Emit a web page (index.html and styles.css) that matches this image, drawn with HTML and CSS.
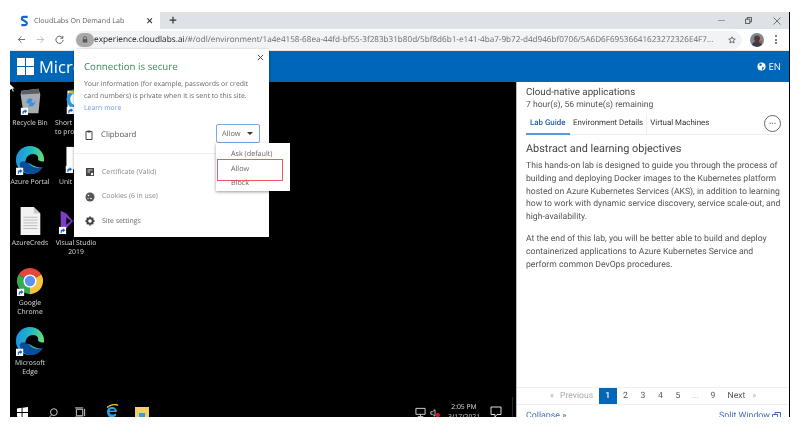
FILE: index.html
```html
<!DOCTYPE html>
<html lang="en">
<head>
<meta charset="utf-8">
<title>CloudLabs On Demand Lab</title>
<link rel="stylesheet" href="styles.css">
</head>
<body>
<svg class="defs" width="0" height="0" aria-hidden="true">
  <defs>
    <symbol id="sc" viewBox="0 0 8 8"><rect width="8" height="8" fill="#fff"/><path d="M2 7V4.500C2 3.500 3 3 4.500 3V1.600L7 3.800 4.500 6V4.600C3.500 4.600 3 5.400 3 7Z" fill="#1a62c4"/></symbol>
    <linearGradient id="edgeA" x1="0" y1="0.300" x2="1" y2="0.500"><stop offset="0" stop-color="#1f8fe0"/><stop offset=".5" stop-color="#24b8c4"/><stop offset="1" stop-color="#6ae070"/></linearGradient>
    <symbol id="edge" viewBox="0 0 32 32">
      <circle cx="16" cy="16" r="15" fill="url(#edgeA)"/>
      <path d="M5 20C5 28 13 31.500 18 31C24 30.500 28 27 30.500 22C26 25 20 25 16 21C12 17 7 16 5 20Z" fill="#0a4c9c"/>
      <path d="M11 19C11 13 15 9.500 19.500 9.500C23.500 9.500 25.500 12.500 24.500 15.500C26 17.500 29 18 32 17.500L32 22C30 24 25 24.500 20.500 22.500C17 21 14 17.500 11 19Z" fill="#000"/>
    </symbol>
  </defs>
</svg>
<div class="window">
  <div class="tabstrip">
    <div class="tab">
      <svg class="fav" viewBox="0 0 10 12"><path d="M8.500 1.500H4C1.500 1.500 1.500 5 4 5.300L6 6.500C8.500 7.500 8 10.500 5.500 10.500H1.500" fill="none" stroke="#1668c7" stroke-width="2.400"/></svg>
      <span class="tab-title">CloudLabs On Demand Lab</span>
      <span class="tab-close">×</span>
    </div>
    <span class="new-tab">+</span>
    <div class="win-controls">
      <span class="win-min"></span>
      <svg class="win-max" viewBox="0 0 8 8"><path d="M.5 2.500h5v5h-5zM2.500 2.500v-2h5v5h-2" fill="none" stroke="#444"/></svg>
      <svg class="win-close" viewBox="0 0 8 8"><path d="M.5.500l7 7M7.500.500l-7 7" stroke="#666" stroke-width=".9"/></svg>
    </div>
  </div>
  <div class="toolbar">
    <svg class="nav" viewBox="0 0 10 10"><path d="M9 5H1.500M5 1.500L1.500 5 5 8.500" fill="none" stroke="#5f6368" stroke-width="1"/></svg>
    <svg class="nav" viewBox="0 0 10 10"><path d="M1 5h7.500M5 1.500L8.500 5 5 8.500" fill="none" stroke="#b5b8bc" stroke-width="1"/></svg>
    <svg class="nav" viewBox="0 0 10 10"><path d="M8.400 3.200A4 4 0 1 0 9 5.500M8.700 .9v2.700H6" fill="none" stroke="#5f6368" stroke-width="1.100"/></svg>
    <div class="omnibox">
      <span class="lock-chip"><svg class="lock" viewBox="0 0 8 9"><path d="M2 4V2.500a2 2 0 0 1 4 0V4" fill="none" stroke="#555"/><rect x="1" y="4" width="6" height="4.500" fill="#555"/></svg></span>
      <span class="url"><b class="host">experience.cloudlabs.ai</b>/#/odl/environment/1a4e4158-68ea-44fd-bf55-3f283b31b80d/5bf8d6b1-e141-4ba7-9b72-d4d946bf0706/5A6D6F69536641623272326E4F7...</span>
      <svg class="star" viewBox="0 0 10 10"><path d="M5 .9l1.200 2.700 2.900.3-2.200 1.900.7 2.900L5 7.200 2.400 8.700l.7-2.900L.9 3.900l2.900-.3z" fill="none" stroke="#444" stroke-width=".9"/></svg>
    </div>
    <svg class="avatar" viewBox="0 0 14 14"><circle cx="7" cy="7" r="7" fill="#7d8a96"/><circle cx="7" cy="5.500" r="3" fill="#5b3a2c"/><path d="M2 12c1-3 3-4 5-4s4 1 5 4l-5 2z" fill="#3c3a48"/><circle cx="10.500" cy="9" r="1.500" fill="#a5533a"/></svg>
    <span class="kebab"><i></i><i></i><i></i></span>
  </div>
  <header class="brandbar">
    <svg class="ms-logo" viewBox="0 0 17 17"><path d="M0 0h8v8H0zM9 0h8v8H9zM0 9h8v8H0zM9 9h8v8H9z" fill="#fff"/></svg>
    <span class="brand">Micro</span>
    <span class="lang">
      <svg class="globe" viewBox="0 0 10 10"><circle cx="5" cy="5" r="4.500" fill="#fff"/><path d="M3 1.500l2.500 1-1 2-2-.5zM6 5.500l2 .5-1.500 2.500H5.500z" fill="#0067b8"/></svg>
      EN
    </span>
  </header>
  <div class="workspace">
    <section class="desktop">
      <div class="dicon d-recycle">
        <svg class="ico" viewBox="0 0 32 32"><path d="M7 5l18-2 2 6-2 20H9L6 9z" fill="#a8adb3"/><path d="M7 5l18-2 1 5-19 1z" fill="#5c6066"/><path d="M13 15c2-3 5-2 6 0l-2 2 4 1 0-4 1 3c-1 4-5 6-8 4l2-2-4-1z" fill="#3b8ede"/><use href="#sc" x="6" y="23" width="8" height="8"/></svg>
        <span>Recycle Bin</span>
      </div>
      <div class="dicon d-short">
        <svg class="ico" viewBox="0 0 32 32"><rect x="9" y="5" width="22" height="20" fill="#fff"/><circle cx="19" cy="14" r="9" fill="none" stroke="#2a9ae0" stroke-width="4"/><path d="M11 6l18 4" stroke="#f0c020" stroke-width="2.500"/><use href="#sc" x="8" y="22" width="8" height="8"/></svg>
        <span class="clip-label">Short<br>to pro</span>
      </div>
      <div class="dicon d-azure">
        <svg class="ico" viewBox="0 0 32 32"><use href="#edge"/><use href="#sc" x="1" y="24" width="8" height="8"/></svg>
        <span>Azure Portal</span>
      </div>
      <div class="dicon d-unity">
        <svg class="ico" viewBox="0 0 32 32"><rect x="9" y="2" width="24" height="24" fill="#fff"/><path d="M24 8l-7 6 7 6 3-2-3-4 3-4z" fill="#222"/><use href="#sc" x="8" y="22" width="8" height="8"/></svg>
        <span class="clip-label">Unit</span>
      </div>
      <div class="dicon d-creds">
        <svg class="ico" viewBox="0 0 32 32"><path d="M6 1h14l7 7v23H6z" fill="#f2f2f2"/><path d="M20 1l7 7h-7z" fill="#c9c9c9"/><path d="M9 12h15M9 15h15M9 18h15M9 21h15M9 24h15" stroke="#b9b9b9"/></svg>
        <span>AzureCreds</span>
      </div>
      <div class="dicon d-vs">
        <svg class="ico" viewBox="0 0 32 32"><path d="M5 5l6 3 7 8 8-11 3 2v18l-3 2-8-11-7 8-6 3z" fill="#7b3fc4"/><path d="M11 12l5 4-5 4z" fill="#000"/><use href="#sc" x="3" y="22" width="8" height="8"/></svg>
        <span>Visual Studio<br>2019</span>
      </div>
      <div class="dicon d-chrome">
        <svg class="ico" viewBox="0 0 32 32"><path d="M16 16L3.900 9A14 14 0 0 1 28.100 9Z" fill="#e2483d"/><path d="M16 16L28.100 9A14 14 0 0 1 16 30Z" fill="#f6c33c"/><path d="M16 16L16 30A14 14 0 0 1 3.900 9Z" fill="#36a853"/><circle cx="16" cy="16" r="7" fill="#fff"/><circle cx="16" cy="16" r="5.500" fill="#5a93ee"/><use href="#sc" x="2" y="24" width="8" height="8"/></svg>
        <span>Google<br>Chrome</span>
      </div>
      <div class="dicon d-edge">
        <svg class="ico" viewBox="0 0 32 32"><use href="#edge"/><use href="#sc" x="1" y="24" width="8" height="8"/></svg>
        <span>Microsoft<br>Edge</span>
      </div>

      <div class="taskbar">
        <svg class="tb-win" viewBox="0 0 12 12"><path d="M0 1.500l5-.7v4.700H0zM6 .7L12 0v5.500H6zM0 6.500h5v4.700l-5-.7zM6 6.500h6V12l-6-.7z" fill="#fff"/></svg>
        <svg class="tb-search" viewBox="0 0 12 12"><circle cx="7.500" cy="4.500" r="3.700" fill="none" stroke="#ddd"/><path d="M5 7.500L1 11.500" stroke="#ddd"/></svg>
        <svg class="tb-task" viewBox="0 0 12 12"><path d="M1.500 2.500h7v7h-7zM0 1h9M0 11h9M10.500 2v8" fill="none" stroke="#ddd"/></svg>
        <svg class="tb-ie" viewBox="0 0 14 14"><path d="M3 11.500C1 8 2 3 7 3c3 0 5 2 5 5H4.500c0 2.500 3.500 3.500 6.500 1.500v2.500C7 14 4.500 14 3 11.500zM4.700 6.500h5C9.500 4.500 5.500 4.500 4.700 6.500z" fill="#2c9de0" fill-rule="evenodd"/><path d="M2 3.500c4-3.500 9-3.500 11-2" stroke="#f0c020" stroke-width="1.300" fill="none"/></svg>
        <svg class="tb-folder" viewBox="0 0 14 14"><rect x="0" y="0" width="14" height="14" fill="#f2d06b"/><rect x="4" y="6" width="6" height="6" fill="#3aa0d0"/></svg>
        <div class="tray">
          <svg class="tr-net" viewBox="0 0 12 12"><path d="M1 1.500h10v6.500H1zM6 8v2M3 10.500h6" fill="none" stroke="#ddd"/></svg>
          <span class="tr-vol"><svg viewBox="0 0 12 12"><path d="M1 4.500h2L6 2v8L3 7.500H1z" fill="none" stroke="#ddd"/><circle cx="9.500" cy="8.500" r="2.500" fill="#e81123"/></svg></span>
          <span class="clock">2:05 PM<br>3/17/2021</span>
          <svg class="tr-note" viewBox="0 0 12 12"><path d="M1 1h10v7.500H7L5 11V8.500H1z" fill="none" stroke="#ddd"/></svg>
        </div>
      </div>
    </section>

    <aside class="guide">
      <div class="guide-top">
        <h1>Cloud-native applications</h1>
        <p class="remaining">7 hour(s), 56 minute(s) remaining</p>
        <div class="tabs">
          <span class="gtab active">Lab Guide</span>
          <span class="gtab">Environment Details</span>
          <span class="gtab last">Virtual Machines</span>
          <span class="more">···</span>
        </div>
      </div>
      <div class="guide-body">
        <h2>Abstract and learning objectives</h2>
        <p>This hands-on lab is designed to guide you through the process of building and deploying Docker images to the Kubernetes platform hosted on Azure Kubernetes Services (AKS), in addition to learning how to work with dynamic service discovery, service scale-out, and high-availability.</p>
        <p>At the end of this lab, you will be better able to build and deploy containerized applications to Azure Kubernetes Service and perform common DevOps procedures.</p>
      </div>
      <nav class="pager">
        <span class="p-mute pg-prev">«</span><span class="p-mute pg-prevw">Previous</span>
        <span class="pg current">1</span><span class="pg">2</span><span class="pg">3</span><span class="pg">4</span><span class="pg">5</span><span class="pg p-mute">...</span><span class="pg">9</span>
        <span class="pg-next">Next</span><span class="p-mute pg-nextm">»</span>
      </nav>
      <div class="guide-foot">
        <span>Collapse »</span>
        <span class="split">Split Window
          <svg class="split-ico" viewBox="0 0 9 9"><path d="M.5 2.500h5v5h-5zM3 2.500V.5h5.500V6H5.500" fill="none" stroke="#3f6fb0"/></svg>
        </span>
      </div>
    </aside>
  </div>

  <div class="popup">
    <svg class="pop-x" viewBox="0 0 8 8"><path d="M1 1l6 6M7 1L1 7" stroke="#444" stroke-width="1.100"/></svg>
    <div class="pop-head">
      <h3>Connection is secure</h3>
      <p>Your information (for example, passwords or credit card numbers) is private when it is sent to this site.</p>
      <a>Learn more</a>
    </div>
    <div class="pop-perm">
      <svg class="pi" viewBox="0 0 10 10"><path d="M2 1.500h6v8H2z" fill="none" stroke="#444"/><rect x="3.500" y=".5" width="3" height="2" fill="#444"/></svg>
      <span class="perm-name">Clipboard</span>
      <span class="select">Allow<i class="caret"></i></span>
    </div>
    <div class="pop-list">
      <div class="pop-row">
        <svg class="pi" viewBox="0 0 10 10"><rect x="1" y="1" width="8" height="8" fill="#444"/><path d="M2.500 3h5M2.500 5h2.500" stroke="#fff" stroke-width=".8"/><circle cx="7" cy="7" r="1.200" fill="#fff"/></svg>
        <span>Certificate (Valid)</span>
      </div>
      <div class="pop-row">
        <svg class="pi" viewBox="0 0 10 10"><circle cx="5" cy="5" r="4.500" fill="#555"/><circle cx="3.500" cy="3.500" r=".8" fill="#fff"/><circle cx="6" cy="6.500" r=".8" fill="#fff"/><circle cx="3" cy="6.500" r=".6" fill="#fff"/></svg>
        <span>Cookies (6 in use)</span>
      </div>
      <div class="pop-row dark">
        <svg class="pi" viewBox="0 0 10 10"><circle cx="5" cy="5" r="2.800" fill="none" stroke="#444" stroke-width="2"/><path d="M5 .3v2M5 7.700v2M.3 5h2M7.700 5h2M1.700 1.700l1.400 1.400M6.900 6.900l1.400 1.400M1.700 8.300l1.400-1.400M6.900 3.100l1.400-1.400" stroke="#444" stroke-width="1.300"/></svg>
        <span>Site settings</span>
      </div>
    </div>
    <div class="menu">
      <div class="opt">Ask (default)</div>
      <div class="opt sel">Allow</div>
      <div class="opt">Block</div>
    </div>
  </div>
  <svg class="cursor" viewBox="0 0 6 9"><path d="M0 0v7l2-1.600L3.500 9l1-.5L3 5.200h2.500z" fill="#fff"/></svg>
</div>
</body>
</html>
```
FILE: styles.css
```css
* { box-sizing: border-box; }
html, body { margin: 0; padding: 0; height: 100%; background: #fff; overflow: hidden; }
body { font-family: "Open Sans", "Liberation Sans", sans-serif; color: #444; text-rendering: geometricPrecision; }
.defs { position: absolute; }

.window {
  position: relative;
  width: 780px;
  height: 405px;
  margin: 12px 0 0 10px;
  display: flex;
  flex-direction: column;
  overflow: hidden;
  border-right: 1px solid #000;
  filter: blur(.45px);
}

/* browser chrome */
.tabstrip { height: 17px; flex: none; display: flex; align-items: center; background: #dee1e6; }
.tab { width: 150px; height: 17px; background: #fff; display: flex; align-items: center; padding: 0 7px 0 10px; }
.fav { width: 9px; height: 12px; flex: none; }
.tab-title { margin-left: 5px; font-size: 7.100px; color: #5f6368; white-space: nowrap; }
.tab-close { margin-left: auto; font-size: 12px; line-height: 12px; color: #333; font-weight: 600; }
.new-tab { margin-left: 9px; font-size: 14px; line-height: 16px; color: #333; font-weight: 600; }
.win-controls { margin-left: auto; display: flex; align-items: center; padding-right: 8px; }
.win-min { width: 7px; height: 1px; background: #999; margin-right: 20px; }
.win-max { width: 7px; height: 7px; margin-right: 21px; }
.win-close { width: 8px; height: 8px; }

.toolbar { height: 22px; flex: none; display: flex; align-items: center; background: #fff; padding-left: 7px; border-bottom: 1px solid #e5e7ea; }
.nav { width: 9px; height: 9px; margin-right: 10px; flex: none; }
.omnibox { width: 667px; height: 18px; margin-left: 1px; background: #f1f3f4; border-radius: 9px; display: flex; align-items: center; flex: none; }
.lock-chip { width: 18px; height: 14px; margin-left: 1px; border-radius: 7px; background: #a9a9a9; display: flex; align-items: center; justify-content: center; flex: none; }
.lock { width: 6px; height: 7px; }
.url { font-size: 8.150px; color: #6a6d70; white-space: nowrap; width: 626px; }
.host { font-size: 8.300px; font-weight: 400; color: #222; }
.star { width: 8px; height: 8px; margin-left: auto; margin-right: 6px; flex: none; }
.avatar { width: 14px; height: 14px; margin-left: 8px; flex: none; }
.kebab { margin-left: 11px; display: flex; flex-direction: column; gap: 1.500px; }
.kebab i { width: 2px; height: 2px; background: #555; border-radius: 50%; display: block; }

.brandbar { height: 31px; flex: none; display: flex; align-items: center; background: #0067b8; color: #fff; padding: 0 8px 0 7px; }
.ms-logo { width: 17px; height: 17px; flex: none; }
.brand { margin-left: 5px; font-size: 16.500px; font-weight: 400; }
.lang { margin-left: auto; display: flex; align-items: center; gap: 3px; font-size: 9.500px; }
.globe { width: 9px; height: 9px; }

.workspace { flex: 1; min-height: 0; display: flex; }

/* remote desktop: icons sit on a free canvas */
.desktop { position: relative; width: 506px; background: #000; flex: none; }
.dicon { position: absolute; width: 46px; display: flex; flex-direction: column; align-items: center; color: #ddd; font-size: 6.800px; line-height: 9.200px; text-align: center; white-space: nowrap; }
.ico { width: 30px; height: 30px; display: block; margin-bottom: 2px; }
.clip-label { align-self: flex-start; text-align: left; }
.d-recycle { left: -3px; top: 4px; }
.d-short { left: 45px; top: 4px; }
.d-short .ico { margin-right: 8px; }
.d-azure { left: -3px; top: 63px; }
.d-unity { left: 49px; top: 63px; }
.d-unity .ico { margin-right: 18px; }
.d-creds { left: -3px; top: 124px; }
.d-vs { left: 43px; top: 124px; }
.d-vs .ico { margin-right: 10px; }
.d-chrome { left: -3px; top: 184px; }
.d-edge { left: -3px; top: 244px; }

/* taskbar strip, cut by the bottom of the remote session */
.taskbar { position: absolute; left: 0; right: 0; bottom: 0; height: 20px; display: flex; align-items: flex-start; }
.taskbar > svg { flex: none; }
.tb-win { width: 11px; height: 11px; margin: 10px 0 0 7px; }
.tb-search { width: 11px; height: 11px; margin: 11px 0 0 19px; }
.tb-task { width: 11px; height: 11px; margin: 10px 0 0 17px; }
.tb-ie { width: 14px; height: 14px; margin: 7px 0 0 19px; }
.tb-folder { width: 14px; height: 14px; margin: 10px 0 0 16px; }
.tray { margin-left: auto; margin-right: 3px; display: flex; align-items: flex-start; height: 20px; color: #ddd; border-right: 1px solid #2a2a2a; padding-right: 10px; }
.tr-net { width: 11px; height: 11px; margin-top: 10px; }
.tr-vol { width: 10px; height: 10px; margin: 11px 0 0 4px; }
.tr-vol svg { display: block; }
.clock { width: 46px; margin: 5px 0 0 1px; font-size: 6.800px; line-height: 10px; text-align: center; white-space: nowrap; }
.tr-note { width: 12px; height: 12px; margin: 9px 0 0 3px; }

/* lab guide */
.guide { flex: 1; min-width: 0; background: #fff; display: flex; flex-direction: column; border-left: 1px solid #bbb; color: #555; font-family: Roboto, "Open Sans", sans-serif; }
.guide-top { padding: 4px 9px 0 9px; height: 53px; flex: none; }
h1 { margin: 0; font-size: 9.750px; line-height: 13px; font-weight: 400; color: #444; }
.remaining { margin: 0; font-size: 8.600px; line-height: 12px; color: #555; }
.tabs { display: flex; align-items: flex-start; height: 22px; margin-top: 2px; border-bottom: 1px solid #eee; position: relative; }
.gtab { font-size: 7.900px; line-height: 20px; height: 22px; padding: 0 3px; color: #333; white-space: nowrap; border-right: 1px solid #eee; }
.gtab.active { color: #1f5fa8; font-weight: 500; border: 0; border-bottom: 2px solid #5b9bd5; padding: 0 4px; width: 44px; }
.gtab.last { border: 0; }
.more { position: absolute; right: -1px; top: 2px; width: 17px; height: 17px; border: 1px solid #666; border-radius: 50%; display: flex; align-items: center; justify-content: center; font-size: 8px; font-weight: 700; line-height: 1; }

.guide-body { flex: 1; min-height: 0; padding: 6px 6px 0 9px; }
h2 { margin: 0 0 3px; font-size: 10.900px; line-height: 16px; font-weight: 400; color: #444; }
.guide-body p { margin: 0 0 9.500px; font-size: 8.650px; line-height: 12.800px; color: #555; }

.pager { height: 18px; flex: none; display: flex; align-items: center; font-size: 8.600px; color: #555; border-top: 1px solid #eee; border-bottom: 1px solid #eee; padding-left: 33px; }
.p-mute { color: #aaa; }
.pg-prevw { margin-left: 6px; width: 39px; }
.pg { width: 17.500px; text-align: center; }
.pg.current { background: #0067b8; color: #fff; height: 16px; line-height: 16px; font-weight: 500; }
.pg-next { margin-left: 6px; }
.pg-nextm { margin-left: 7px; }

.guide-foot { height: 12px; flex: none; display: flex; justify-content: space-between; align-items: flex-start; padding: 5px 8px 0 9px; font-size: 8.800px; line-height: 12px; color: #3f6fb0; white-space: nowrap; }
.split { display: flex; align-items: center; gap: 2px; }
.split-ico { width: 9px; height: 9px; }

/* site-info popup, lies over the page */
.popup { position: absolute; left: 64px; top: 37px; width: 195px; height: 188px; background: #fff; box-shadow: 0 1px 3px rgba(0,0,0,.35); display: flex; flex-direction: column; color: #666; }
.pop-x { position: absolute; right: 5px; top: 5px; width: 7px; height: 7px; }
.pop-head { padding: 12px 8px 0 10px; height: 75px; flex: none; }
h3 { margin: 0 0 6px; font-size: 9.700px; line-height: 12px; font-weight: 400; color: #3c8a5a; }
.pop-head p { margin: 0; font-size: 6.900px; line-height: 12px; color: #666; }
.pop-head a { display: block; font-size: 6.900px; line-height: 12px; color: #6b9be6; }
.pop-perm { height: 30px; flex: none; display: flex; align-items: center; padding: 0 0 8px 10px; border-bottom: 1px solid #eee; position: relative; }
.pi { width: 10px; height: 10px; flex: none; }
.perm-name { margin-left: 7px; font-size: 7.800px; color: #555; }
.select { position: absolute; left: 142px; top: 0; width: 44px; height: 19px; border: 1px solid #7aa7e6; border-radius: 2px; font-size: 7.400px; line-height: 18px; padding-left: 5px; color: #666; }
.caret { position: absolute; right: 6px; top: 7px; border: 3px solid transparent; border-top-color: #333; border-bottom: 0; }
.pop-list { display: flex; flex-direction: column; padding-top: 6px; }
.pop-row { height: 24.500px; display: flex; align-items: center; padding-left: 11px; font-size: 6.900px; color: #888; }
.pop-row span { margin-left: 7px; }
.pop-row.dark { color: #666; }

.menu { position: absolute; left: 142px; top: 94px; width: 74px; height: 48px; background: #fff; box-shadow: 0 1px 3px rgba(0,0,0,.4); padding-top: 4px; }
.opt { height: 14.700px; line-height: 15px; padding-left: 15px; font-size: 7.200px; color: #666; position: relative; }
.opt.sel::after { content: ""; position: absolute; left: 1px; top: -3px; width: 64px; height: 20px; border: 1.500px solid #ef5a62; }

.cursor { position: absolute; left: 0; top: 72px; width: 5px; height: 8px; }
```
